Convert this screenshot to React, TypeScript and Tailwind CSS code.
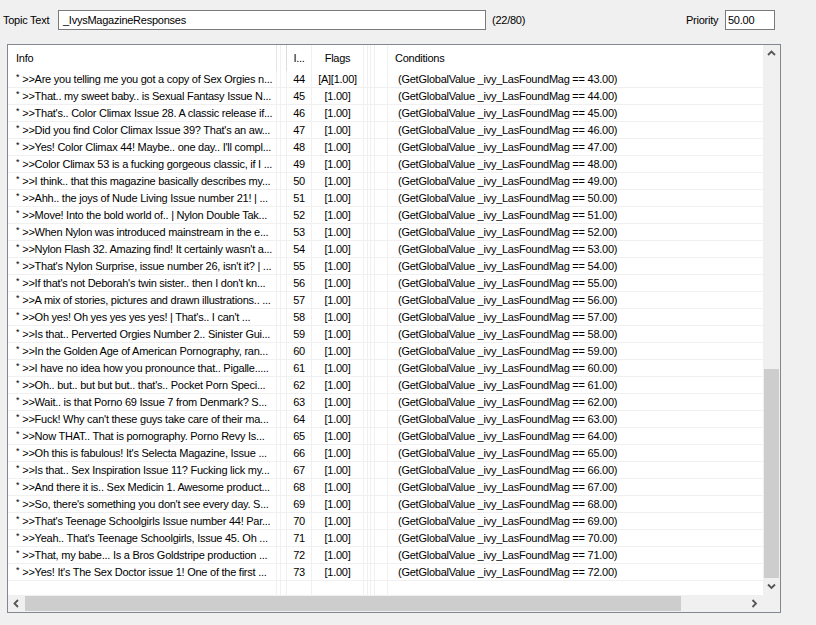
import React from 'react';

type Row = { id: number; info: string; flags: string };

const rows: Row[] = [
  { id: 44, info: '>>Are you telling me you got a copy of Sex Orgies n...', flags: '[A][1.00]' },
  { id: 45, info: '>>That.. my sweet baby.. is Sexual Fantasy Issue N...', flags: '[1.00]' },
  { id: 46, info: ">>That's.. Color Climax Issue 28. A classic release if...", flags: '[1.00]' },
  { id: 47, info: ">>Did you find Color Climax Issue 39? That's an aw...", flags: '[1.00]' },
  { id: 48, info: ">>Yes! Color Climax 44! Maybe.. one day.. I'll compl...", flags: '[1.00]' },
  { id: 49, info: '>>Color Climax 53 is a fucking gorgeous classic, if I ...', flags: '[1.00]' },
  { id: 50, info: '>>I think.. that this magazine basically describes my...', flags: '[1.00]' },
  { id: 51, info: '>>Ahh.. the joys of Nude Living Issue number 21! | ...', flags: '[1.00]' },
  { id: 52, info: '>>Move! Into the bold world of.. | Nylon Double Tak...', flags: '[1.00]' },
  { id: 53, info: '>>When Nylon was introduced mainstream in the e...', flags: '[1.00]' },
  { id: 54, info: ">>Nylon Flash 32. Amazing find! It certainly wasn't a...", flags: '[1.00]' },
  { id: 55, info: ">>That's Nylon Surprise, issue number 26, isn't it? | ...", flags: '[1.00]' },
  { id: 56, info: ">>If that's not Deborah's twin sister.. then I don't kn...", flags: '[1.00]' },
  { id: 57, info: '>>A mix of stories, pictures and drawn illustrations.. ...', flags: '[1.00]' },
  { id: 58, info: ">>Oh yes! Oh yes yes yes yes! | That's.. I can't ...", flags: '[1.00]' },
  { id: 59, info: '>>Is that.. Perverted Orgies Number 2.. Sinister Gui...', flags: '[1.00]' },
  { id: 60, info: '>>In the Golden Age of American Pornography, ran...', flags: '[1.00]' },
  { id: 61, info: '>>I have no idea how you pronounce that.. Pigalle.....', flags: '[1.00]' },
  { id: 62, info: ">>Oh.. but.. but but but.. that's.. Pocket Porn Speci...", flags: '[1.00]' },
  { id: 63, info: '>>Wait.. is that Porno 69 Issue 7 from Denmark? S...', flags: '[1.00]' },
  { id: 64, info: ">>Fuck! Why can't these guys take care of their ma...", flags: '[1.00]' },
  { id: 65, info: '>>Now THAT.. That is pornography. Porno Revy Is...', flags: '[1.00]' },
  { id: 66, info: ">>Oh this is fabulous! It's Selecta Magazine, Issue ...", flags: '[1.00]' },
  { id: 67, info: '>>Is that.. Sex Inspiration Issue 11? Fucking lick my...', flags: '[1.00]' },
  { id: 68, info: '>>And there it is.. Sex Medicin 1. Awesome product...', flags: '[1.00]' },
  { id: 69, info: ">>So, there's something you don't see every day. S...", flags: '[1.00]' },
  { id: 70, info: ">>That's Teenage Schoolgirls Issue number 44! Par...", flags: '[1.00]' },
  { id: 71, info: ">>Yeah.. That's Teenage Schoolgirls, Issue 45. Oh ...", flags: '[1.00]' },
  { id: 72, info: '>>That, my babe... Is a Bros Goldstripe production ...', flags: '[1.00]' },
  { id: 73, info: ">>Yes! It's The Sex Doctor issue 1! One of the first ...", flags: '[1.00]' },
];

// list view column cells; the right border doubles as the grid line
const cInfo = 'w-[269px] shrink-0 border-r border-[#f0f0f0] pl-[8px] overflow-hidden whitespace-nowrap';
const cThin4 = 'w-[4px] shrink-0 border-r border-[#f0f0f0]';
const cThin6 = 'w-[6px] shrink-0 border-r border-[#f0f0f0]';
const cThin3 = 'w-[3px] shrink-0 border-r border-[#f0f0f0]';
const cThin13 = 'w-[13px] shrink-0 border-r border-[#f0f0f0]';
const cId = 'w-[25px] shrink-0 border-r border-[#f0f0f0] text-center overflow-hidden whitespace-nowrap';
const cFlags = 'w-[52px] shrink-0 border-r border-[#f0f0f0] text-center overflow-hidden whitespace-nowrap';
const cCond = 'w-[420px] shrink-0 whitespace-nowrap';

function Chevron({ dir }: { dir: 'up' | 'down' | 'left' | 'right' }) {
  const d = {
    up: 'M1 5 L4.5 1.5 L8 5',
    down: 'M1 1.5 L4.5 5 L8 1.5',
    left: 'M5 1 L1.5 4.5 L5 8',
    right: 'M1.5 1 L5 4.5 L1.5 8',
  }[dir];
  const horiz = dir === 'up' || dir === 'down';
  return (
    <svg width={horiz ? 9 : 7} height={horiz ? 7 : 9} viewBox={horiz ? '0 0 9 7' : '0 0 7 9'}>
      <path d={d} fill="none" stroke="#555555" strokeWidth="1.8" />
    </svg>
  );
}

export default function App() {
  return (
    <div className="w-[816px] h-[625px] bg-[#f0f0f0] text-[11px] tracking-[-0.25px] text-black overflow-hidden" style={{ fontFamily: '"Liberation Sans", Arial, sans-serif' }}>
      {/* topic text / priority bar */}
      <div className="flex items-center h-[20px] mt-[10px]">
        <div className="w-[58px] pl-[3px] pt-px">Topic Text</div>
        <div className="w-[428px] h-[20px] bg-white border border-[#7a7a7a] pl-[4px] flex items-center">_IvysMagazineResponses</div>
        <div className="w-[194px] ml-[6px]">(22/80)</div>
        <div className="w-[39px]">Priority</div>
        <div className="w-[50px] h-[20px] bg-white border border-[#7a7a7a] pl-[2px] flex items-center">50.00</div>
      </div>

      {/* response list */}
      <div className="ml-[7px] mt-[14px] w-[774px] h-[569px] border border-[#828790] bg-white flex flex-col">
        <div className="flex flex-1 min-h-0">
          <div className="w-[755px] overflow-hidden flex flex-col">
            <div className="flex h-[26px] shrink-0">
              <div className={cInfo.replace('border-[#f0f0f0]', 'border-[#e5e5e5]') + ' flex items-center'}>Info</div>
              <div className={cThin4} />
              <div className={cThin6.replace('border-[#f0f0f0]', 'border-[#dcdcdc]')} />
              <div className={cId + ' flex items-center justify-center'}>I...</div>
              <div className={cFlags + ' flex items-center justify-center'}>Flags</div>
              <div className={cThin4} />
              <div className={cThin3} />
              <div className={cThin4} />
              <div className={cThin13} />
              <div className={cCond + ' pl-[7px] flex items-center'}>Conditions</div>
            </div>
            {rows.map((r) => (
              <div key={r.id} className="flex h-[17px] items-stretch border-b border-[#f0f0f0] shrink-0">
                <div className={cInfo + ' flex items-center'}>
                  <span className="text-[9px] -mt-[3px] mr-[3px]">*</span>
                  <span>{r.info}</span>
                </div>
                <div className={cThin4} />
                <div className={cThin6} />
                <div className={cId + ' flex items-center justify-center'}>{r.id}</div>
                <div className={cFlags + ' flex items-center justify-center'}>{r.flags}</div>
                <div className={cThin4} />
                <div className={cThin3} />
                <div className={cThin4} />
                <div className={cThin13} />
                <div className={cCond + ' pl-[10px] flex items-center'}>
                  (GetGlobalValue _ivy_LasFoundMag == {(r.id - 1).toFixed(2)})
                </div>
              </div>
            ))}
            {/* grid lines continue below the last item */}
            <div className="flex flex-1">
              <div className={cInfo} />
              <div className={cThin4} />
              <div className={cThin6} />
              <div className={cId} />
              <div className={cFlags} />
              <div className={cThin4} />
              <div className={cThin3} />
              <div className={cThin4} />
              <div className={cThin13} />
              <div className={cCond} />
            </div>
          </div>
          {/* vertical scrollbar */}
          <div className="w-[17px] bg-[#f0f0f0] flex flex-col">
            <div className="h-[17px] flex items-center justify-center shrink-0"><Chevron dir="up" /></div>
            <div className="flex-1 flex flex-col justify-end">
              <div className="h-[209px] mx-px bg-[#cdcdcd]" />
            </div>
            <div className="h-[17px] flex items-center justify-center shrink-0"><Chevron dir="down" /></div>
          </div>
        </div>
        {/* horizontal scrollbar */}
        <div className="h-[17px] flex shrink-0">
          <div className="w-[755px] bg-[#f0f0f0] flex">
            <div className="w-[17px] flex items-center justify-center shrink-0"><Chevron dir="left" /></div>
            <div className="flex-1 flex py-px">
              <div className="w-[656px] bg-[#cdcdcd]" />
            </div>
            <div className="w-[17px] flex items-center justify-center shrink-0"><Chevron dir="right" /></div>
          </div>
          <div className="w-[17px] bg-[#f0f0f0]" />
        </div>
      </div>
    </div>
  );
}
